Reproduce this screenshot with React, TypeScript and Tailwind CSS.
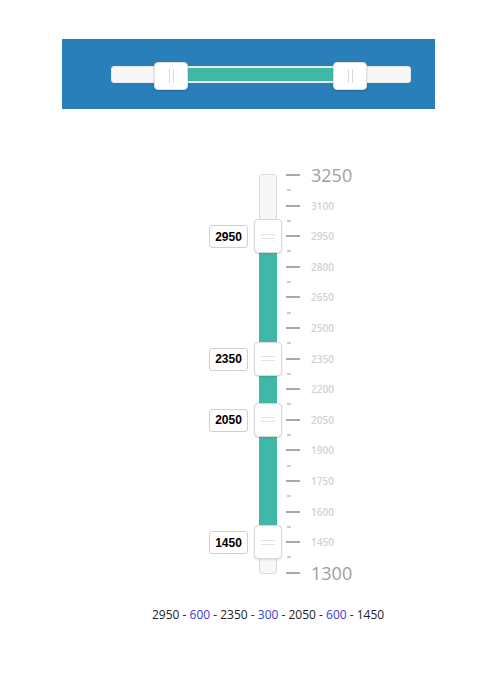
import React from "react";

const TOP = 3250;
const BOTTOM = 1300;
const SCALE_H = 398;
const pos = (v: number) => ((TOP - v) / (TOP - BOTTOM)) * SCALE_H + 1; // relative to track top

const values = [2950, 2350, 2050, 1450];

function VHandle({ v }: { v: number }) {
  const y = pos(v);
  return (
    <div
      className="absolute left-0 w-[28px] h-[34px] rounded-[4px] bg-white border border-[#d8d8d8] shadow-[0_1px_2px_rgba(0,0,0,0.12)] flex flex-col items-center justify-center gap-[3px]"
      style={{ top: y - 17 }}
    >
      <div className="w-[14px] h-px bg-[#e2e2e2]" />
      <div className="w-[14px] h-px bg-[#e2e2e2]" />
      <div className="absolute right-[33px] top-[5px] w-[39px] h-[23px] rounded-[3px] border border-[#d0d0d0] bg-white flex items-center justify-center text-[12px] font-bold text-black font-['Liberation_Sans',Arial,sans-serif]">
        {v}
      </div>
    </div>
  );
}

function HHandle({ left }: { left: number }) {
  return (
    <div
      className="absolute top-[-5px] w-[34px] h-[28px] rounded-[4px] bg-white border border-[#e0e0e0] shadow-[0_1px_2px_rgba(0,0,0,0.2)] flex items-center justify-center gap-[3px]"
      style={{ left }}
    >
      <div className="w-px h-[14px] bg-[#d8d8d8]" />
      <div className="w-px h-[14px] bg-[#d8d8d8]" />
    </div>
  );
}

export default function App() {
  const ticks: number[] = [];
  for (let v = TOP; v >= BOTTOM; v -= 75) ticks.push(v);

  return (
    <div className="w-[500px] h-[700px] bg-white font-['Open_Sans',sans-serif]">
      <div className="pt-[39px] pl-[62px]">
        <div className="w-[373px] h-[70px] bg-[#2a7fba] flex items-center pl-[49px]">
          <div className="relative w-[300px] h-[17px] rounded-[3px] bg-[#f7f7f7] border border-[#e8e8e8]">
            <div className="absolute left-[60px] w-[179px] top-[0px] h-[15px] bg-[#3fb8a8] border-y border-[#e6f3f1]" />
            <HHandle left={42} />
            <HHandle left={221} />
          </div>
        </div>
      </div>

      <div className="mt-[65px] pl-[254px] flex">
        <div className="relative w-[28px] h-[400px]">
          <div className="absolute left-[5px] top-0 w-[18px] h-[400px] rounded-[3px] bg-[#f7f7f7] border border-[#dcdcdc]" />
          <div
            className="absolute left-[5px] w-[18px] bg-[#3fb8a8]"
            style={{ top: pos(2950), height: pos(1450) - pos(2950) }}
          />
          {values.map((v) => (
            <VHandle key={v} v={v} />
          ))}
        </div>
        <div className="ml-[4px] mt-[1px] h-[398px] flex flex-col justify-between">
          {ticks.map((v, i) => {
            const major = i % 2 === 0;
            const big = v === TOP || v === BOTTOM;
            return (
              <div key={v} className="h-0 flex items-center">
                {major ? (
                  <div className="w-[14px] h-[2px] bg-[#a8a8a8]" />
                ) : (
                  <div className="w-[14px] flex">
                    <div className="ml-[1px] w-[4px] h-[2px] bg-[#cfcfcf]" />
                  </div>
                )}
                {major && (
                  <span
                    className={
                      big
                        ? "ml-[11px] text-[18px] leading-none text-[#a0a0a0]"
                        : "ml-[11px] text-[10px] leading-none font-semibold text-[#d2d2d2]"
                    }
                  >
                    {v}
                  </span>
                )}
              </div>
            );
          })}
        </div>
      </div>

      <div className="mt-[32px] pl-[152px] text-[12px] text-[#222]">
        2950 - <span className="text-[#3b3bd4]">600</span> - 2350 -{" "}
        <span className="text-[#3b3bd4]">300</span> - 2050 -{" "}
        <span className="text-[#3b3bd4]">600</span> - 1450
      </div>
    </div>
  );
}
